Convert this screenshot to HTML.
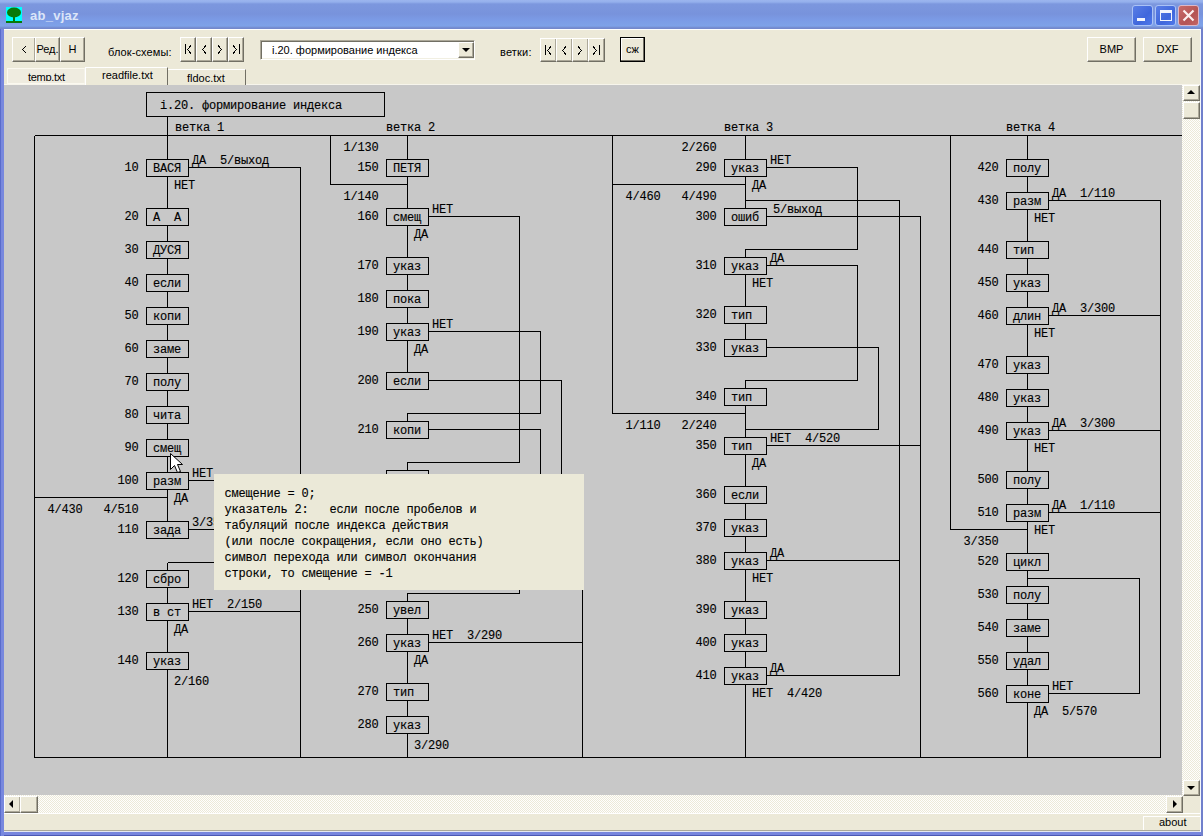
<!DOCTYPE html>
<html><head><meta charset="utf-8"><style>
*{box-sizing:border-box}
html,body{margin:0;padding:0;width:1203px;height:836px;overflow:hidden;background:#7a96df;font-family:"Liberation Sans", sans-serif}
.abs{position:absolute}
#title{left:0;top:0;width:1203px;height:29px;background:linear-gradient(#9bb5ee 0,#94b0ec 2px,#7c97de 4px,#7893dc 14px,#7b9be6 20px,#7ea2e8 26px,#7388cc 28px,#7388cc 29px)}
#ttext{left:30px;top:8px;font:bold 13px "Liberation Sans", sans-serif;letter-spacing:0.25px;color:#dbe5f8}
#client{left:4px;top:29px;width:1196px;height:802px;background:#ece9d8;border-top:1px solid #fff}
.btn{position:absolute;background:#ece9d8;border-top:1px solid #fff;border-left:1px solid #fff;border-right:1px solid #716f64;border-bottom:1px solid #716f64;box-shadow:inset -1px -1px 0 #aca899;font:11px "Liberation Sans", sans-serif;color:#000;text-align:center;line-height:22px}
.lbl{position:absolute;font:11px "Liberation Sans", sans-serif;color:#000;white-space:nowrap}
#area{left:4px;top:85px;width:1178px;height:710px;background:#c8c8c8;overflow:hidden}
.dg{position:absolute;left:0;top:0}
#tip{left:214px;top:474px;width:370px;height:116px;background:#ebe9d8}
#tip pre{margin:0;position:absolute;left:10.5px;top:12px;font:12px/16px "Liberation Mono", monospace;letter-spacing:-0.2px;color:#000;-webkit-text-stroke:0.12px #000}
.track{background-color:#fbfaf5;background-image:repeating-conic-gradient(#ece9d8 0 25%, #fefefe 0 50%);background-size:2px 2px}
.sb{position:absolute;background:#ece9d8;border-top:1px solid #fff;border-left:1px solid #fff;border-right:1px solid #716f64;border-bottom:1px solid #716f64;box-shadow:inset -1px -1px 0 #aca899}
</style></head><body>
<div id="title" class="abs"></div>
<div class="abs" style="left:6px;top:7px;width:16px;height:16px;background:#00ffff"></div>
<svg class="abs" style="left:6px;top:7px" width="16" height="16"><ellipse cx="8" cy="5.5" rx="7" ry="5" fill="#087a08"/><rect x="7" y="9" width="2" height="6" fill="#087a08"/><rect x="0" y="14" width="16" height="2" fill="#087a08"/></svg>
<div id="ttext" class="abs">ab_vjaz</div>
<div class="abs" style="left:1132px;top:5px;width:21px;height:21px;border-radius:3px;background:linear-gradient(135deg,#5a7ee6,#3f67dc 60%,#4f78ea);border:1px solid #aac2f6"><div style="position:absolute;left:4px;top:12px;width:8px;height:3px;background:#f2f5fd"></div></div>
<div class="abs" style="left:1155px;top:5px;width:21px;height:21px;border-radius:3px;background:linear-gradient(135deg,#5a7ee6,#3f67dc 60%,#4f78ea);border:1px solid #aac2f6"><div style="position:absolute;left:4px;top:4px;width:12px;height:11px;border:1px solid #f2f5fd;border-top-width:3px"></div></div>
<div class="abs" style="left:1178px;top:5px;width:21px;height:21px;border-radius:3px;background:linear-gradient(135deg,#c86a6a,#b45454 60%,#c46464);border:1px solid #dcb8c8"></div>
<svg class="abs" style="left:1182px;top:9px" width="13" height="13"><path d="M1.5 1.5 L11.5 11.5 M11.5 1.5 L1.5 11.5" stroke="#fbeeee" stroke-width="2.2"/></svg>
<div id="client" class="abs"></div>
<!-- toolbar -->
<div class="btn" style="left:12px;top:37px;width:24px;height:25px"></div>
<div class="btn" style="left:35px;top:37px;width:25px;height:25px">Ред.</div>
<div class="btn" style="left:60px;top:37px;width:25px;height:25px">Н</div>
<div class="lbl" style="left:108px;top:46px;letter-spacing:0.1px">блок-схемы:</div>
<div class="btn" style="left:180px;top:37px;width:16px;height:25px"></div>
<div class="btn" style="left:196px;top:37px;width:16px;height:25px"></div>
<div class="btn" style="left:212px;top:37px;width:16px;height:25px"></div>
<div class="btn" style="left:228px;top:37px;width:16px;height:25px"></div>
<div class="abs" style="left:260px;top:40px;width:215px;height:20px;background:#fff;border-top:1px solid #aca899;border-left:1px solid #aca899;border-bottom:1px solid #fff;border-right:1px solid #fff;box-shadow:inset 1px 1px 0 #716f64, inset -1px -1px 0 #f1efe2"></div>
<div class="lbl" style="left:272px;top:44px">i.20. формирование индекса</div>
<div class="btn" style="left:458px;top:42px;width:16px;height:16px"></div>
<div class="abs" style="left:462px;top:48px;width:0;height:0;border-left:4px solid transparent;border-right:4px solid transparent;border-top:4px solid #000"></div>
<div class="lbl" style="left:500px;top:46px;letter-spacing:0.2px">ветки:</div>
<div class="btn" style="left:540px;top:38px;width:17px;height:24px"></div>
<div class="btn" style="left:556px;top:38px;width:17px;height:24px"></div>
<div class="btn" style="left:572px;top:38px;width:17px;height:24px"></div>
<div class="btn" style="left:588px;top:38px;width:17px;height:24px"></div>
<div class="btn" style="left:620px;top:37px;width:25px;height:25px;border:1px solid #000;box-shadow:inset -1px -1px 0 #716f64, inset 1px 1px 0 #fff">сж</div>
<div class="btn" style="left:1087px;top:37px;width:49px;height:25px">BMP</div>
<div class="btn" style="left:1143px;top:37px;width:49px;height:25px">DXF</div>
<svg class="abs" style="left:0;top:0" width="700" height="70"><g fill="none" stroke="#000" stroke-width="1" shape-rendering="crispEdges">
<path d="M26 46 L22.5 49.5 L26 53"/>
<path d="M185.5 44 V54 M191 45.5 L187.5 49.5 L191 53.5"/>
<path d="M206 45.5 L202.5 49.5 L206 53.5"/>
<path d="M218 45.5 L221.5 49.5 L218 53.5"/>
<path d="M233 45.5 L236.5 49.5 L233 53.5 M239.5 44 V54"/>
<path d="M545.5 45 V55 M551 46.5 L547.5 50.5 L551 54.5"/>
<path d="M566 46.5 L562.5 50.5 L566 54.5"/>
<path d="M578 46.5 L581.5 50.5 L578 54.5"/>
<path d="M593 46.5 L596.5 50.5 L593 54.5 M599.5 45 V55"/>
</g></svg>
<div class="abs" style="left:4px;top:84px;width:1196px;height:1px;background:#f7f5ec"></div>
<!-- tabs -->
<div class="abs" style="left:7px;top:68px;width:78px;height:16px;background:#efece0;border-top:1px solid #fbf9f0;border-left:1px solid #fbf9f0;border-right:1px solid #f4f2e8;border-bottom:1px solid #fbf9f0;overflow:hidden"><div style="position:absolute;left:0;top:0;width:76px;height:12px;overflow:hidden"><div class="lbl" style="left:20px;top:2px;letter-spacing:-0.3px">temp.txt</div></div></div>
<div class="abs" style="left:85px;top:67px;width:83px;height:18px;background:#ece9d8;border-top:1px solid #fff;border-left:1px solid #fff;border-right:1px solid #716f64;overflow:hidden"><div class="lbl" style="left:16px;top:1px">readfile.txt</div></div>
<div class="abs" style="left:168px;top:69px;width:78px;height:16px;background:#ece9d8;border-top:1px solid #fff;border-right:1px solid #716f64;overflow:hidden"><div class="lbl" style="left:19px;top:2px">fldoc.txt</div></div>
<!-- drawing area -->
<div id="area" class="abs">
<svg class="dg" width="1178" height="710" viewBox="4 85 1178 710">
<path d="M34.5 135.5 L1182.5 135.5 M34.5 135.5 L34.5 757.5 M34.5 757.5 L1160.5 757.5 M167.5 116.5 L167.5 135.5 M167.5 135.5 L167.5 159.5 M407.5 135.5 L407.5 159.5 M745.5 135.5 L745.5 159.5 M1027.5 135.5 L1027.5 159.5 M188.5 167.5 L300.5 167.5 M300.5 167.5 L300.5 757.5 M167.5 176.5 L167.5 208.5 M167.5 225.5 L167.5 241.5 M167.5 258.5 L167.5 274.5 M167.5 291.5 L167.5 307.5 M167.5 324.5 L167.5 340.5 M167.5 357.5 L167.5 373.5 M167.5 390.5 L167.5 406.5 M167.5 423.5 L167.5 439.5 M167.5 456.5 L167.5 472.5 M167.5 489.5 L167.5 521.5 M167.5 587.5 L167.5 603.5 M167.5 620.5 L167.5 652.5 M188.5 480.5 L300.5 480.5 M34.5 497.5 L167.5 497.5 M188.5 529.5 L300.5 529.5 M167.5 562.5 L300.5 562.5 M167.5 562.5 L167.5 570.5 M188.5 611.5 L300.5 611.5 M167.5 669.5 L167.5 757.5 M330.5 135.5 L330.5 184.5 M330.5 184.5 L407.5 184.5 M407.5 176.5 L407.5 208.5 M407.5 225.5 L407.5 257.5 M407.5 274.5 L407.5 290.5 M407.5 307.5 L407.5 323.5 M407.5 340.5 L407.5 372.5 M407.5 618.5 L407.5 634.5 M407.5 651.5 L407.5 683.5 M407.5 700.5 L407.5 716.5 M428.5 216.5 L519.5 216.5 L519.5 462.5 L407.5 462.5 L407.5 470.5 M428.5 331.5 L540.5 331.5 L540.5 413.5 L407.5 413.5 L407.5 421.5 M428.5 380.5 L561.5 380.5 L561.5 500.5 M428.5 429.5 L540.5 429.5 L540.5 500.5 M519.5 520.5 L519.5 593.5 L407.5 593.5 L407.5 601.5 M428.5 642.5 L582.5 642.5 M582.5 480.5 L582.5 757.5 M407.5 733.5 L407.5 757.5 M612.5 135.5 L612.5 413.5 L745.5 413.5 M612.5 184.5 L745.5 184.5 M745.5 176.5 L745.5 208.5 M745.5 274.5 L745.5 306.5 M745.5 323.5 L745.5 339.5 M745.5 405.5 L745.5 437.5 M745.5 454.5 L745.5 486.5 M745.5 503.5 L745.5 519.5 M745.5 536.5 L745.5 552.5 M745.5 569.5 L745.5 601.5 M745.5 618.5 L745.5 634.5 M745.5 651.5 L745.5 667.5 M766.5 167.5 L857.5 167.5 L857.5 249.5 L745.5 249.5 L745.5 257.5 M745.5 200.5 L899.5 200.5 L899.5 675.5 L766.5 675.5 M766.5 216.5 L920.5 216.5 L920.5 757.5 M766.5 265.5 L857.5 265.5 L857.5 380.5 L745.5 380.5 L745.5 388.5 M766.5 347.5 L878.5 347.5 L878.5 429.5 L745.5 429.5 L745.5 437.5 M766.5 445.5 L920.5 445.5 M766.5 560.5 L899.5 560.5 M745.5 684.5 L745.5 757.5 M950.5 135.5 L950.5 529.5 L1027.5 529.5 M1027.5 176.5 L1027.5 192.5 M1027.5 209.5 L1027.5 241.5 M1027.5 258.5 L1027.5 274.5 M1027.5 291.5 L1027.5 307.5 M1027.5 324.5 L1027.5 356.5 M1027.5 373.5 L1027.5 389.5 M1027.5 406.5 L1027.5 422.5 M1027.5 439.5 L1027.5 471.5 M1027.5 488.5 L1027.5 504.5 M1027.5 521.5 L1027.5 553.5 M1027.5 570.5 L1027.5 586.5 M1027.5 603.5 L1027.5 619.5 M1027.5 636.5 L1027.5 652.5 M1027.5 669.5 L1027.5 685.5 M1048.5 200.5 L1160.5 200.5 L1160.5 757.5 M1048.5 315.5 L1160.5 315.5 M1048.5 430.5 L1160.5 430.5 M1048.5 512.5 L1160.5 512.5 M1027.5 578.5 L1139.5 578.5 L1139.5 693.5 L1048.5 693.5 M1027.5 702.5 L1027.5 757.5" fill="none" stroke="#000" stroke-width="1" shape-rendering="crispEdges"/>
<rect x="146.5" y="92.5" width="238" height="24" fill="none" stroke="#000" shape-rendering="crispEdges"/>
<rect x="146.5" y="159.5" width="42" height="17" fill="#c8c8c8" stroke="#000" shape-rendering="crispEdges"/>
<rect x="146.5" y="208.5" width="42" height="17" fill="#c8c8c8" stroke="#000" shape-rendering="crispEdges"/>
<rect x="146.5" y="241.5" width="42" height="17" fill="#c8c8c8" stroke="#000" shape-rendering="crispEdges"/>
<rect x="146.5" y="274.5" width="42" height="17" fill="#c8c8c8" stroke="#000" shape-rendering="crispEdges"/>
<rect x="146.5" y="307.5" width="42" height="17" fill="#c8c8c8" stroke="#000" shape-rendering="crispEdges"/>
<rect x="146.5" y="340.5" width="42" height="17" fill="#c8c8c8" stroke="#000" shape-rendering="crispEdges"/>
<rect x="146.5" y="373.5" width="42" height="17" fill="#c8c8c8" stroke="#000" shape-rendering="crispEdges"/>
<rect x="146.5" y="406.5" width="42" height="17" fill="#c8c8c8" stroke="#000" shape-rendering="crispEdges"/>
<rect x="146.5" y="439.5" width="42" height="17" fill="#c8c8c8" stroke="#000" shape-rendering="crispEdges"/>
<rect x="146.5" y="472.5" width="42" height="17" fill="#c8c8c8" stroke="#000" shape-rendering="crispEdges"/>
<rect x="146.5" y="521.5" width="42" height="17" fill="#c8c8c8" stroke="#000" shape-rendering="crispEdges"/>
<rect x="146.5" y="570.5" width="42" height="17" fill="#c8c8c8" stroke="#000" shape-rendering="crispEdges"/>
<rect x="146.5" y="603.5" width="42" height="17" fill="#c8c8c8" stroke="#000" shape-rendering="crispEdges"/>
<rect x="146.5" y="652.5" width="42" height="17" fill="#c8c8c8" stroke="#000" shape-rendering="crispEdges"/>
<rect x="386.5" y="159.5" width="42" height="17" fill="#c8c8c8" stroke="#000" shape-rendering="crispEdges"/>
<rect x="386.5" y="208.5" width="42" height="17" fill="#c8c8c8" stroke="#000" shape-rendering="crispEdges"/>
<rect x="386.5" y="257.5" width="42" height="17" fill="#c8c8c8" stroke="#000" shape-rendering="crispEdges"/>
<rect x="386.5" y="290.5" width="42" height="17" fill="#c8c8c8" stroke="#000" shape-rendering="crispEdges"/>
<rect x="386.5" y="323.5" width="42" height="17" fill="#c8c8c8" stroke="#000" shape-rendering="crispEdges"/>
<rect x="386.5" y="372.5" width="42" height="17" fill="#c8c8c8" stroke="#000" shape-rendering="crispEdges"/>
<rect x="386.5" y="421.5" width="42" height="17" fill="#c8c8c8" stroke="#000" shape-rendering="crispEdges"/>
<rect x="386.5" y="470.5" width="42" height="17" fill="#c8c8c8" stroke="#000" shape-rendering="crispEdges"/>
<rect x="386.5" y="519.5" width="42" height="17" fill="#c8c8c8" stroke="#000" shape-rendering="crispEdges"/>
<rect x="386.5" y="552.5" width="42" height="17" fill="#c8c8c8" stroke="#000" shape-rendering="crispEdges"/>
<rect x="386.5" y="601.5" width="42" height="17" fill="#c8c8c8" stroke="#000" shape-rendering="crispEdges"/>
<rect x="386.5" y="634.5" width="42" height="17" fill="#c8c8c8" stroke="#000" shape-rendering="crispEdges"/>
<rect x="386.5" y="683.5" width="42" height="17" fill="#c8c8c8" stroke="#000" shape-rendering="crispEdges"/>
<rect x="386.5" y="716.5" width="42" height="17" fill="#c8c8c8" stroke="#000" shape-rendering="crispEdges"/>
<rect x="724.5" y="159.5" width="42" height="17" fill="#c8c8c8" stroke="#000" shape-rendering="crispEdges"/>
<rect x="724.5" y="208.5" width="42" height="17" fill="#c8c8c8" stroke="#000" shape-rendering="crispEdges"/>
<rect x="724.5" y="257.5" width="42" height="17" fill="#c8c8c8" stroke="#000" shape-rendering="crispEdges"/>
<rect x="724.5" y="306.5" width="42" height="17" fill="#c8c8c8" stroke="#000" shape-rendering="crispEdges"/>
<rect x="724.5" y="339.5" width="42" height="17" fill="#c8c8c8" stroke="#000" shape-rendering="crispEdges"/>
<rect x="724.5" y="388.5" width="42" height="17" fill="#c8c8c8" stroke="#000" shape-rendering="crispEdges"/>
<rect x="724.5" y="437.5" width="42" height="17" fill="#c8c8c8" stroke="#000" shape-rendering="crispEdges"/>
<rect x="724.5" y="486.5" width="42" height="17" fill="#c8c8c8" stroke="#000" shape-rendering="crispEdges"/>
<rect x="724.5" y="519.5" width="42" height="17" fill="#c8c8c8" stroke="#000" shape-rendering="crispEdges"/>
<rect x="724.5" y="552.5" width="42" height="17" fill="#c8c8c8" stroke="#000" shape-rendering="crispEdges"/>
<rect x="724.5" y="601.5" width="42" height="17" fill="#c8c8c8" stroke="#000" shape-rendering="crispEdges"/>
<rect x="724.5" y="634.5" width="42" height="17" fill="#c8c8c8" stroke="#000" shape-rendering="crispEdges"/>
<rect x="724.5" y="667.5" width="42" height="17" fill="#c8c8c8" stroke="#000" shape-rendering="crispEdges"/>
<rect x="1006.5" y="159.5" width="42" height="17" fill="#c8c8c8" stroke="#000" shape-rendering="crispEdges"/>
<rect x="1006.5" y="192.5" width="42" height="17" fill="#c8c8c8" stroke="#000" shape-rendering="crispEdges"/>
<rect x="1006.5" y="241.5" width="42" height="17" fill="#c8c8c8" stroke="#000" shape-rendering="crispEdges"/>
<rect x="1006.5" y="274.5" width="42" height="17" fill="#c8c8c8" stroke="#000" shape-rendering="crispEdges"/>
<rect x="1006.5" y="307.5" width="42" height="17" fill="#c8c8c8" stroke="#000" shape-rendering="crispEdges"/>
<rect x="1006.5" y="356.5" width="42" height="17" fill="#c8c8c8" stroke="#000" shape-rendering="crispEdges"/>
<rect x="1006.5" y="389.5" width="42" height="17" fill="#c8c8c8" stroke="#000" shape-rendering="crispEdges"/>
<rect x="1006.5" y="422.5" width="42" height="17" fill="#c8c8c8" stroke="#000" shape-rendering="crispEdges"/>
<rect x="1006.5" y="471.5" width="42" height="17" fill="#c8c8c8" stroke="#000" shape-rendering="crispEdges"/>
<rect x="1006.5" y="504.5" width="42" height="17" fill="#c8c8c8" stroke="#000" shape-rendering="crispEdges"/>
<rect x="1006.5" y="553.5" width="42" height="17" fill="#c8c8c8" stroke="#000" shape-rendering="crispEdges"/>
<rect x="1006.5" y="586.5" width="42" height="17" fill="#c8c8c8" stroke="#000" shape-rendering="crispEdges"/>
<rect x="1006.5" y="619.5" width="42" height="17" fill="#c8c8c8" stroke="#000" shape-rendering="crispEdges"/>
<rect x="1006.5" y="652.5" width="42" height="17" fill="#c8c8c8" stroke="#000" shape-rendering="crispEdges"/>
<rect x="1006.5" y="685.5" width="42" height="17" fill="#c8c8c8" stroke="#000" shape-rendering="crispEdges"/>
<g font-family='"Liberation Mono", monospace' font-size="12" letter-spacing="-0.2" fill="#000" stroke="#000" stroke-width="0.12" style="white-space:pre">
<text x="160" y="109" xml:space="preserve">i.20. формирование индекса</text>
<text x="175" y="131" xml:space="preserve">ветка 1</text>
<text x="386" y="131" xml:space="preserve">ветка 2</text>
<text x="724" y="131" xml:space="preserve">ветка 3</text>
<text x="1006" y="131" xml:space="preserve">ветка 4</text>
<text x="138.5" y="171" text-anchor="end" xml:space="preserve">10</text>
<text x="153" y="171.5" xml:space="preserve">ВАСЯ</text>
<text x="138.5" y="220" text-anchor="end" xml:space="preserve">20</text>
<text x="153" y="220.5" xml:space="preserve">А  А</text>
<text x="138.5" y="253" text-anchor="end" xml:space="preserve">30</text>
<text x="153" y="253.5" xml:space="preserve">ДУСЯ</text>
<text x="138.5" y="286" text-anchor="end" xml:space="preserve">40</text>
<text x="153" y="286.5" xml:space="preserve">если</text>
<text x="138.5" y="319" text-anchor="end" xml:space="preserve">50</text>
<text x="153" y="319.5" xml:space="preserve">копи</text>
<text x="138.5" y="352" text-anchor="end" xml:space="preserve">60</text>
<text x="153" y="352.5" xml:space="preserve">заме</text>
<text x="138.5" y="385" text-anchor="end" xml:space="preserve">70</text>
<text x="153" y="385.5" xml:space="preserve">полу</text>
<text x="138.5" y="418" text-anchor="end" xml:space="preserve">80</text>
<text x="153" y="418.5" xml:space="preserve">чита</text>
<text x="138.5" y="451" text-anchor="end" xml:space="preserve">90</text>
<text x="153" y="451.5" xml:space="preserve">смещ</text>
<text x="138.5" y="484" text-anchor="end" xml:space="preserve">100</text>
<text x="153" y="484.5" xml:space="preserve">разм</text>
<text x="138.5" y="533" text-anchor="end" xml:space="preserve">110</text>
<text x="153" y="533.5" xml:space="preserve">зада</text>
<text x="138.5" y="582" text-anchor="end" xml:space="preserve">120</text>
<text x="153" y="582.5" xml:space="preserve">сбро</text>
<text x="138.5" y="615" text-anchor="end" xml:space="preserve">130</text>
<text x="153" y="615.5" xml:space="preserve">в ст</text>
<text x="138.5" y="664" text-anchor="end" xml:space="preserve">140</text>
<text x="153" y="664.5" xml:space="preserve">указ</text>
<text x="378.5" y="171" text-anchor="end" xml:space="preserve">150</text>
<text x="393" y="171.5" xml:space="preserve">ПЕТЯ</text>
<text x="378.5" y="220" text-anchor="end" xml:space="preserve">160</text>
<text x="393" y="220.5" xml:space="preserve">смещ</text>
<text x="378.5" y="269" text-anchor="end" xml:space="preserve">170</text>
<text x="393" y="269.5" xml:space="preserve">указ</text>
<text x="378.5" y="302" text-anchor="end" xml:space="preserve">180</text>
<text x="393" y="302.5" xml:space="preserve">пока</text>
<text x="378.5" y="335" text-anchor="end" xml:space="preserve">190</text>
<text x="393" y="335.5" xml:space="preserve">указ</text>
<text x="378.5" y="384" text-anchor="end" xml:space="preserve">200</text>
<text x="393" y="384.5" xml:space="preserve">если</text>
<text x="378.5" y="433" text-anchor="end" xml:space="preserve">210</text>
<text x="393" y="433.5" xml:space="preserve">копи</text>
<text x="378.5" y="613" text-anchor="end" xml:space="preserve">250</text>
<text x="393" y="613.5" xml:space="preserve">увел</text>
<text x="378.5" y="646" text-anchor="end" xml:space="preserve">260</text>
<text x="393" y="646.5" xml:space="preserve">указ</text>
<text x="378.5" y="695" text-anchor="end" xml:space="preserve">270</text>
<text x="393" y="695.5" xml:space="preserve">тип</text>
<text x="378.5" y="728" text-anchor="end" xml:space="preserve">280</text>
<text x="393" y="728.5" xml:space="preserve">указ</text>
<text x="716.5" y="171" text-anchor="end" xml:space="preserve">290</text>
<text x="731" y="171.5" xml:space="preserve">указ</text>
<text x="716.5" y="220" text-anchor="end" xml:space="preserve">300</text>
<text x="731" y="220.5" xml:space="preserve">ошиб</text>
<text x="716.5" y="269" text-anchor="end" xml:space="preserve">310</text>
<text x="731" y="269.5" xml:space="preserve">указ</text>
<text x="716.5" y="318" text-anchor="end" xml:space="preserve">320</text>
<text x="731" y="318.5" xml:space="preserve">тип</text>
<text x="716.5" y="351" text-anchor="end" xml:space="preserve">330</text>
<text x="731" y="351.5" xml:space="preserve">указ</text>
<text x="716.5" y="400" text-anchor="end" xml:space="preserve">340</text>
<text x="731" y="400.5" xml:space="preserve">тип</text>
<text x="716.5" y="449" text-anchor="end" xml:space="preserve">350</text>
<text x="731" y="449.5" xml:space="preserve">тип</text>
<text x="716.5" y="498" text-anchor="end" xml:space="preserve">360</text>
<text x="731" y="498.5" xml:space="preserve">если</text>
<text x="716.5" y="531" text-anchor="end" xml:space="preserve">370</text>
<text x="731" y="531.5" xml:space="preserve">указ</text>
<text x="716.5" y="564" text-anchor="end" xml:space="preserve">380</text>
<text x="731" y="564.5" xml:space="preserve">указ</text>
<text x="716.5" y="613" text-anchor="end" xml:space="preserve">390</text>
<text x="731" y="613.5" xml:space="preserve">указ</text>
<text x="716.5" y="646" text-anchor="end" xml:space="preserve">400</text>
<text x="731" y="646.5" xml:space="preserve">указ</text>
<text x="716.5" y="679" text-anchor="end" xml:space="preserve">410</text>
<text x="731" y="679.5" xml:space="preserve">указ</text>
<text x="998.5" y="171" text-anchor="end" xml:space="preserve">420</text>
<text x="1013" y="171.5" xml:space="preserve">полу</text>
<text x="998.5" y="204" text-anchor="end" xml:space="preserve">430</text>
<text x="1013" y="204.5" xml:space="preserve">разм</text>
<text x="998.5" y="253" text-anchor="end" xml:space="preserve">440</text>
<text x="1013" y="253.5" xml:space="preserve">тип</text>
<text x="998.5" y="286" text-anchor="end" xml:space="preserve">450</text>
<text x="1013" y="286.5" xml:space="preserve">указ</text>
<text x="998.5" y="319" text-anchor="end" xml:space="preserve">460</text>
<text x="1013" y="319.5" xml:space="preserve">длин</text>
<text x="998.5" y="368" text-anchor="end" xml:space="preserve">470</text>
<text x="1013" y="368.5" xml:space="preserve">указ</text>
<text x="998.5" y="401" text-anchor="end" xml:space="preserve">480</text>
<text x="1013" y="401.5" xml:space="preserve">указ</text>
<text x="998.5" y="434" text-anchor="end" xml:space="preserve">490</text>
<text x="1013" y="434.5" xml:space="preserve">указ</text>
<text x="998.5" y="483" text-anchor="end" xml:space="preserve">500</text>
<text x="1013" y="483.5" xml:space="preserve">полу</text>
<text x="998.5" y="516" text-anchor="end" xml:space="preserve">510</text>
<text x="1013" y="516.5" xml:space="preserve">разм</text>
<text x="998.5" y="565" text-anchor="end" xml:space="preserve">520</text>
<text x="1013" y="565.5" xml:space="preserve">цикл</text>
<text x="998.5" y="598" text-anchor="end" xml:space="preserve">530</text>
<text x="1013" y="598.5" xml:space="preserve">полу</text>
<text x="998.5" y="631" text-anchor="end" xml:space="preserve">540</text>
<text x="1013" y="631.5" xml:space="preserve">заме</text>
<text x="998.5" y="664" text-anchor="end" xml:space="preserve">550</text>
<text x="1013" y="664.5" xml:space="preserve">удал</text>
<text x="998.5" y="697" text-anchor="end" xml:space="preserve">560</text>
<text x="1013" y="697.5" xml:space="preserve">коне</text>
<text x="192" y="164" xml:space="preserve">ДА  5/выход</text>
<text x="174" y="189" xml:space="preserve">НЕТ</text>
<text x="192" y="477" xml:space="preserve">НЕТ</text>
<text x="174" y="502" xml:space="preserve">ДА</text>
<text x="138.5" y="513" text-anchor="end" xml:space="preserve">4/430   4/510</text>
<text x="192" y="526" xml:space="preserve">3/350</text>
<text x="192" y="608" xml:space="preserve">НЕТ  2/150</text>
<text x="174" y="633" xml:space="preserve">ДА</text>
<text x="174" y="685" xml:space="preserve">2/160</text>
<text x="378.5" y="151" text-anchor="end" xml:space="preserve">1/130</text>
<text x="378.5" y="200" text-anchor="end" xml:space="preserve">1/140</text>
<text x="432" y="213" xml:space="preserve">НЕТ</text>
<text x="414" y="238" xml:space="preserve">ДА</text>
<text x="432" y="328" xml:space="preserve">НЕТ</text>
<text x="414" y="353" xml:space="preserve">ДА</text>
<text x="432" y="639" xml:space="preserve">НЕТ  3/290</text>
<text x="414" y="664" xml:space="preserve">ДА</text>
<text x="414" y="749" xml:space="preserve">3/290</text>
<text x="716.5" y="151" text-anchor="end" xml:space="preserve">2/260</text>
<text x="770" y="164" xml:space="preserve">НЕТ</text>
<text x="752" y="189" xml:space="preserve">ДА</text>
<text x="716.5" y="200" text-anchor="end" xml:space="preserve">4/460   4/490</text>
<text x="773" y="213" xml:space="preserve">5/выход</text>
<text x="770" y="262" xml:space="preserve">ДА</text>
<text x="752" y="287" xml:space="preserve">НЕТ</text>
<text x="716.5" y="429" text-anchor="end" xml:space="preserve">1/110   2/240</text>
<text x="770" y="442" xml:space="preserve">НЕТ  4/520</text>
<text x="752" y="467" xml:space="preserve">ДА</text>
<text x="770" y="557" xml:space="preserve">ДА</text>
<text x="752" y="582" xml:space="preserve">НЕТ</text>
<text x="770" y="672" xml:space="preserve">ДА</text>
<text x="752" y="697" xml:space="preserve">НЕТ  4/420</text>
<text x="1052" y="197" xml:space="preserve">ДА  1/110</text>
<text x="1034" y="222" xml:space="preserve">НЕТ</text>
<text x="1052" y="312" xml:space="preserve">ДА  3/300</text>
<text x="1034" y="337" xml:space="preserve">НЕТ</text>
<text x="1052" y="427" xml:space="preserve">ДА  3/300</text>
<text x="1034" y="452" xml:space="preserve">НЕТ</text>
<text x="1052" y="509" xml:space="preserve">ДА  1/110</text>
<text x="1034" y="534" xml:space="preserve">НЕТ</text>
<text x="998.5" y="545" text-anchor="end" xml:space="preserve">3/350</text>
<text x="1052" y="690" xml:space="preserve">НЕТ</text>
<text x="1034" y="715" xml:space="preserve">ДА  5/570</text>
</g>
<path d="M170.5 453.5 L170.5 469.5 L174.5 465.5 L177.5 472.5 L180.5 471.5 L177.5 464.5 L182.5 464.5 Z" fill="#fff" stroke="#000" stroke-width="1" stroke-linejoin="miter"/>
</svg>
<div id="tip" class="abs" style="left:210px;top:389px"><pre>смещение = 0;
указатель 2:   если после пробелов и
табуляций после индекса действия
(или после сокращения, если оно есть)
символ перехода или символ окончания
строки, то смещение = -1</pre></div>
</div>
<!-- vertical scrollbar -->
<div class="abs track" style="left:1182px;top:85px;width:18px;height:711px"></div>
<div class="sb" style="left:1183px;top:85px;width:17px;height:16px"></div>
<div class="abs" style="left:1187px;top:90px;width:0;height:0;border-left:4px solid transparent;border-right:4px solid transparent;border-bottom:4px solid #000"></div>
<div class="sb" style="left:1183px;top:102px;width:17px;height:17px"></div>
<div class="sb" style="left:1183px;top:780px;width:17px;height:16px"></div>
<div class="abs" style="left:1187px;top:786px;width:0;height:0;border-left:4px solid transparent;border-right:4px solid transparent;border-top:4px solid #000"></div>
<!-- horizontal scrollbar -->
<div class="abs track" style="left:4px;top:795px;width:1179px;height:18px"></div>
<div class="sb" style="left:4px;top:796px;width:17px;height:17px"></div>
<div class="abs" style="left:9px;top:800px;width:0;height:0;border-top:4px solid transparent;border-bottom:4px solid transparent;border-right:4px solid #000"></div>
<div class="sb" style="left:20px;top:796px;width:18px;height:17px"></div>
<div class="sb" style="left:1166px;top:796px;width:17px;height:17px"></div>
<div class="abs" style="left:1173px;top:800px;width:0;height:0;border-top:4px solid transparent;border-bottom:4px solid transparent;border-left:4px solid #000"></div>
<div class="abs" style="left:1183px;top:796px;width:17px;height:17px;background:#ece9d8"></div>
<!-- status bar -->
<div class="abs" style="left:4px;top:813px;width:1196px;height:19px;background:#ece9d8;border-top:1px solid #fff"></div>
<div class="abs" style="left:1143px;top:816px;width:57px;height:15px;background:#ece9d8;border-top:1px solid #fff;border-left:1px solid #fff;border-bottom:1px solid #aca899;"></div>
<div class="lbl" style="left:1159px;top:816px">about</div>
<div class="abs" style="left:4px;top:830px;width:1196px;height:1px;background:#aca899"></div>
<div class="abs" style="left:4px;top:831px;width:1197px;height:1px;background:#e6e8f2"></div>
<div class="abs" style="left:0;top:832px;width:1203px;height:4px;background:#7886de;border-bottom:1px solid #4c58b4"></div>
<div class="abs" style="left:0;top:29px;width:4px;height:807px;background:#7888de;border-left:1px solid #5a6ccb"></div>
<div class="abs" style="left:1200px;top:29px;width:1px;height:803px;background:#f4f8fc"></div>
<div class="abs" style="left:1201px;top:29px;width:2px;height:807px;background:#7080cc"></div>
</body></html>
